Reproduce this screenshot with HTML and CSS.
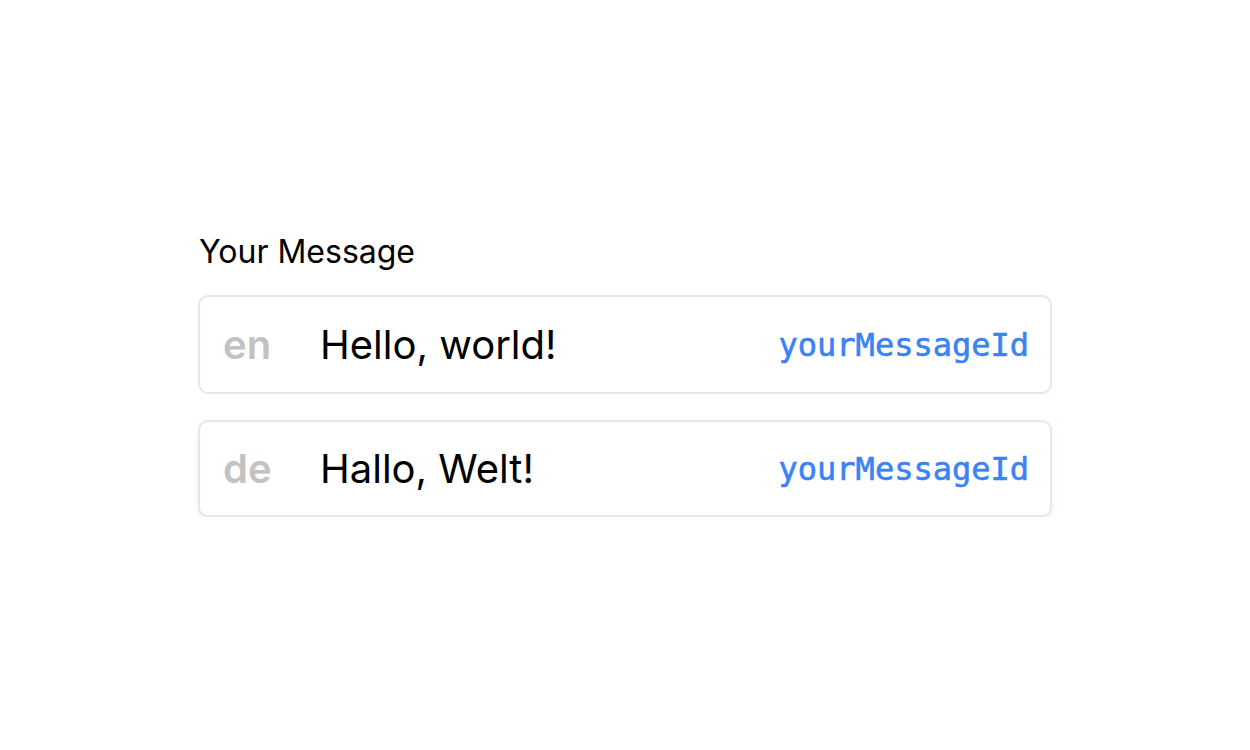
FILE: index.html
```html
<!DOCTYPE html>
<html>
<head>
<meta charset="utf-8">
<link rel="stylesheet" href="styles.css">
</head>
<body>
<main class="wrap">
  <div class="title">Your Message</div>
  <div class="card">
    <span class="lang">en</span>
    <span class="msg">Hello, world!</span>
    <span class="id">yourMessageId</span>
  </div>
  <div class="card card-shadow">
    <span class="lang">de</span>
    <span class="msg">Hallo, Welt!</span>
    <span class="id">yourMessageId</span>
  </div>
</main>
</body>
</html>
```
FILE: styles.css
```css
html, body { margin: 0; padding: 0; background: #fff; }
body {
  padding-top: 233px;
  font-family: Inter, "Noto Sans", sans-serif;
  color: #000;
}
.wrap {
  width: 854px;
  margin: 0 auto;
  display: flex;
  flex-direction: column;
  gap: 26px;
}
.title {
  font-size: 32px;
  line-height: 38px;
  height: 38px;
  padding-left: 1px;
  margin-bottom: -2px;
}
.card {
  box-sizing: border-box;
  height: 99px;
  flex: none;
  border: 2px solid #e2e8f0;
  border-radius: 10px;
  display: flex;
  align-items: center;
  padding: 0 21px 0 23px;
}
.card-shadow {
  height: 97px;
  box-shadow: 0 4px 8px -1px rgba(0,0,0,0.07), 0 2px 4px -2px rgba(0,0,0,0.06);
}
.lang {
  width: 97px;
  flex: none;
  font-size: 40px;
  font-weight: 600;
  color: #c2c2c2;
}
.msg {
  flex: 1;
  font-size: 40px;
}
.id {
  font-family: "DejaVu Sans Mono", monospace;
  font-size: 32px;
  color: #3b82f6;
  -webkit-text-stroke: 0.6px #3b82f6;
}
```
